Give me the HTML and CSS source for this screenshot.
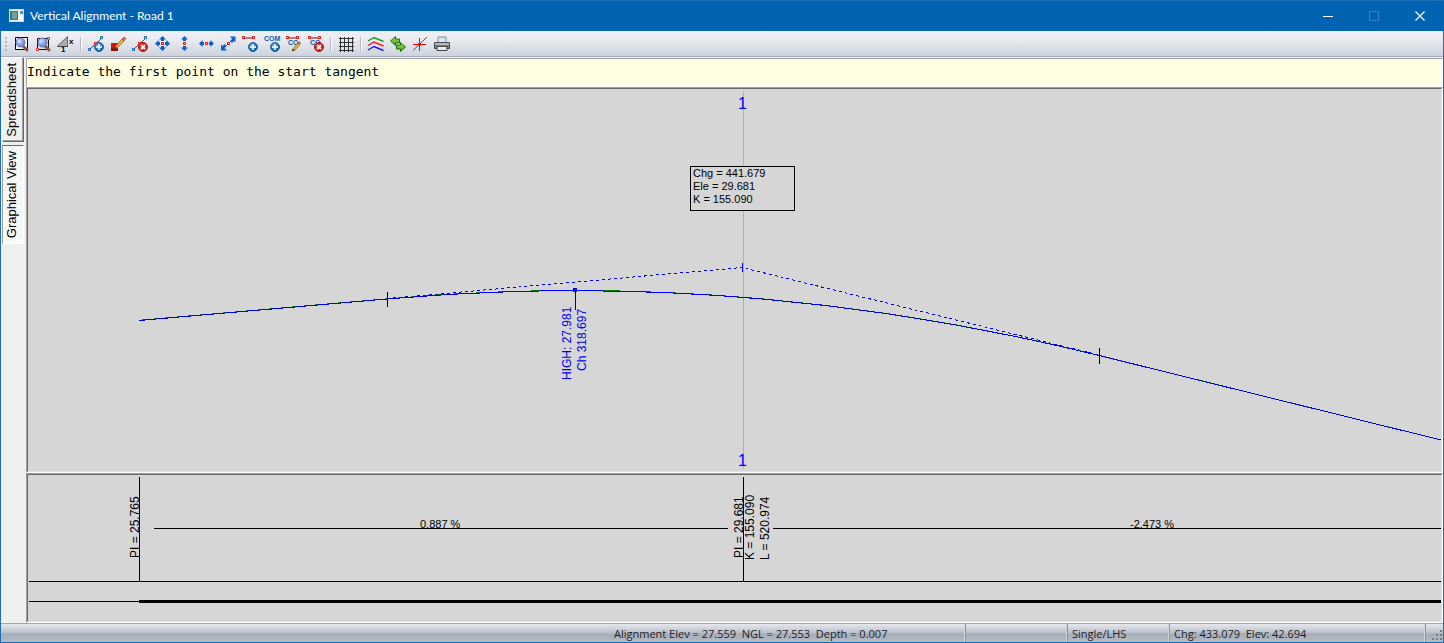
FILE: index.html
```html
<!DOCTYPE html>
<html lang="en">
<head>
<meta charset="utf-8">
<title>Vertical Alignment - Road 1</title>
<link rel="stylesheet" href="styles.css">
</head>
<body>
<svg class="defs" aria-hidden="true">
  <defs>
    <radialGradient id="lens" cx="35%" cy="35%"><stop offset="0" stop-color="#dce6ff"/><stop offset="1" stop-color="#7393dc"/></radialGradient>
    <radialGradient id="blueBall" cx="40%" cy="35%"><stop offset="0" stop-color="#5fb4ef"/><stop offset="1" stop-color="#1767b3"/></radialGradient>
    <linearGradient id="greenFill" x2="0" y2="1"><stop offset="0" stop-color="#9be05a"/><stop offset="1" stop-color="#3fa41c"/></linearGradient>
    <g id="magnifier">
      <path d="M10.5 10.5L14 14" stroke="#8a5a3c" stroke-width="3" stroke-linecap="round"/>
      <circle cx="7.5" cy="6.5" r="4.5" fill="url(#lens)" stroke="#6078b4"/>
    </g>
    <g id="nodes">
      <path d="M2 13L14 2" stroke="#444"/>
      <path d="M.5 12.5h2v2h-2zM12.5.5h2v2h-2z" fill="#fff" stroke="#0a64c8"/>
      <path d="M6.500 6.500h2v2h-2z" fill="#fff" stroke="#f00"/>
    </g>
    <g id="plus">
      <circle cx="11" cy="11" r="4.500" fill="url(#blueBall)" stroke="#1d5fa6"/>
      <path d="M11 8v6M8 11h6" stroke="#fff" stroke-width="1.500"/>
    </g>
    <g id="remove">
      <circle cx="11" cy="11" r="4.500" fill="#e02020" stroke="#b01212"/>
      <path d="M9 9l4 4M13 9l-4 4" stroke="#fff" stroke-width="1.800"/>
    </g>
    <g id="segment">
      <path d="M2 2h10" stroke="#7a1010"/>
      <path d="M.5.5h2v2h-2zM10.500.5h2v2h-2z" fill="#fff" stroke="#f00"/>
    </g>
    <path id="mid" d="M7.500 6.500h2v2h-2z" fill="#fff" stroke="#f00"/>
    <path id="vert" d="M8.500 0L12 3.500H10V5H7V3.500H5zM8.500 15L12 11.500H10V10H7v1.500H5z" fill="#0f62c4"/>
    <path id="horiz" d="M1 7.500L4.500 4v2H6v3H4.500v2zM16 7.500L12.500 4v2H11v3h1.500v2z" fill="#0f62c4"/>
  </defs>
</svg>

<div class="window">
  <header class="titlebar">
    <svg class="app-icon" width="16" height="14" viewBox="0 0 16 14" aria-hidden="true">
      <rect x=".5" y=".5" width="14" height="12" fill="#eef3f2" stroke="#cfd8dc"/>
      <rect x="1" y="2" width="8" height="9" fill="#39796f"/><rect x="3" y="3" width="5" height="7" fill="#6fa39a"/>
      <rect x="11" y="2" width="3" height="3" fill="#5a8fa8"/><rect x="11" y="6" width="3" height="5" fill="#fff"/>
    </svg>
    <h1 class="title">Vertical Alignment - Road 1</h1>
    <button class="win-btn" aria-label="Minimize"><svg width="11" height="11"><path d="M0 5.500h10" stroke="#fff"/></svg></button>
    <button class="win-btn" aria-label="Maximize" disabled><svg width="11" height="11"><path d="M.5.5h9v9h-9z" fill="none" stroke="#3384c8"/></svg></button>
    <button class="win-btn" aria-label="Close"><svg width="11" height="11"><path d="M.5.5l9 9M9.500.5l-9 9" stroke="#fff" stroke-width="1.200"/></svg></button>
  </header>

  <div class="toolbar" role="toolbar" aria-label="Alignment tools">
    <span class="grip"></span>
    <button class="tool" aria-label="Zoom extents"><svg viewBox="0 0 16 16"><path d="M2.500 1.500h12v12h-12z" fill="#fff" stroke="#000"/><use href="#magnifier"/></svg></button>
    <button class="tool" aria-label="Zoom window"><svg viewBox="0 0 16 16"><path d="M2.500 2.500h11v11h-11z" fill="#ddd" stroke="#111"/><use href="#magnifier"/><path d="M12.500 1.500h2v2h-2zM1.500 12.500h2v2h-2z" fill="#fff" stroke="#e8252b"/></svg></button>
    <button class="tool" aria-label="Vertical exaggeration"><svg viewBox="0 0 16 16"><path d="M0 10.500L10.500.500v10z" fill="#aaa" stroke="#666"/><path d="M1 10.500h10" stroke="#444"/><text x="12" y="8" class="glyph">x</text><text x="4" y="16" class="glyph">1</text></svg></button>
    <span class="sep sep-wide"></span>
    <button class="tool" aria-label="Add PI"><svg viewBox="0 0 16 16"><use href="#nodes"/><use href="#plus"/></svg></button>
    <button class="tool" aria-label="Edit PI"><svg viewBox="0 0 16 16"><path d="M1 7h7v8H1z" fill="#d81414"/><path d="M1 12h7v3H1z" fill="#9c0b0b"/><path d="M5 11L12 3l2 2-7 7-3 1z" fill="#f0b83c" stroke="#8c5a1e" stroke-width=".8"/><path d="M12 3l2-2 2 1.500L14 5z" fill="#d66a6a" stroke="#945"  stroke-width=".6"/><path d="M4 13l1-2.500 1.500 1.500z" fill="#222"/></svg></button>
    <button class="tool" aria-label="Delete PI"><svg viewBox="0 0 16 16"><use href="#nodes"/><use href="#remove"/></svg></button>
    <button class="tool" aria-label="Move PI"><svg viewBox="0 0 16 16"><use href="#vert"/><use href="#horiz"/><use href="#mid"/></svg></button>
    <button class="tool" aria-label="Move PI vertically"><svg viewBox="0 0 16 16"><use href="#vert"/><use href="#mid"/></svg></button>
    <button class="tool" aria-label="Move PI horizontally"><svg viewBox="0 0 16 16"><use href="#horiz"/><use href="#mid"/></svg></button>
    <button class="tool" aria-label="Move PI along grade"><svg viewBox="0 0 16 16"><path d="M3 13L14 2" stroke="#777"/><path d="M15.500.5v6l-1.500-1.500-2 2-2-2 2-2L10 .5zM1 14.500v-6l1.500 1.500 2-2 2 2-2 2L7 14.500z" fill="#0f62c4"/><use href="#mid"/></svg></button>
    <button class="tool" aria-label="Add segment"><svg viewBox="0 0 16 16"><use href="#segment"/><use href="#plus"/></svg></button>
    <button class="tool" aria-label="Add comment"><svg viewBox="0 0 16 16"><text x="0" y="5" class="glyph com">COM</text><use href="#plus"/></svg></button>
    <button class="tool" aria-label="Edit comment"><svg viewBox="0 0 16 16"><use href="#segment"/><text x="2" y="9" class="glyph com">CO</text><path d="M7 13l5-6 2 1.500-5 5.500-3 1z" fill="#f0b83c" stroke="#8c5a1e" stroke-width=".8"/><path d="M12 7l1.500-1.500L15 7l-1 1.500z" fill="#c65a4a"/><path d="M6 15l1-2 1.500 1.200z" fill="#222"/></svg></button>
    <button class="tool" aria-label="Delete comment"><svg viewBox="0 0 16 16"><use href="#segment"/><text x="2" y="9" class="glyph com">CO</text><use href="#remove"/></svg></button>
    <span class="sep"></span>
    <button class="tool" aria-label="Grid"><svg viewBox="0 0 16 16"><path d="M2.500 1v15M6.500 1v15M10.500 1v15M14.500 1v15M1 2.500h15M1 6.500h15M1 10.500h15M1 14.500h15" stroke="#333"/></svg></button>
    <span class="sep"></span>
    <button class="tool" aria-label="Layers"><svg viewBox="0 0 16 16" fill="none" stroke-width="1.400"><path d="M0 5L6 1.500L15.500 5.500" stroke="#159a2a"/><path d="M0 9.500L6 6L15.500 10" stroke="#f01818"/><path d="M0 14L6 10.500L15.500 14.500" stroke="#1818f0"/></svg></button>
    <button class="tool" aria-label="Swap direction"><svg viewBox="0 0 16 16"><path d="M.5 5L5.500.5v2.500h4v4h-4v2.500z" fill="url(#greenFill)" stroke="#246b12"/><path d="M15.500 11l-5-4.500V9h-4v4h4v2.500z" fill="url(#greenFill)" stroke="#246b12"/></svg></button>
    <button class="tool" aria-label="Snap"><svg viewBox="0 0 16 16"><path d="M1 14.500L15 1" stroke="#555"/><path d="M7.500 2v13M1 8.500h13" stroke="#f00"/><path d="M6.500 7.500h2v2h-2z" fill="none" stroke="#f00"/></svg></button>
    <button class="tool" aria-label="Print"><svg viewBox="0 0 16 16"><path d="M4 1h8v6H4z" fill="#d7e8fb" stroke="#7f8a96"/><path d="M.5 6.500h15v6H.5z" fill="#777d84" stroke="#4c5055"/><path d="M1 7h14v2H1z" fill="#b6bac0"/><path d="M3 10.500h10v4H3z" fill="#e6ecf4" stroke="#444"/></svg></button>
  </div>

  <div class="workspace">
    <nav class="tabs" role="tablist" aria-label="Views">
      <button class="tab" role="tab" aria-selected="false"><span>Spreadsheet</span></button>
      <button class="tab tab-active" role="tab" aria-selected="true"><span>Graphical View</span></button>
    </nav>
    <main class="content">
      <p class="prompt">Indicate the first point on the start tangent</p>

      <section class="pane profile" aria-label="Vertical profile">
        <svg class="canvas">
          <path class="guide" d="M715.500 2V380"/>
          <text class="station" x="710" y="20">1</text>
          <text class="station" x="710" y="377">1</text>
          <path class="tangent" d="M359 209.500L714 178.500L1071 266"/>
          <path class="ground" d="M111 231.300L359 209.800Q715 178.300 1071 266.400L1413 351"/>
          <path class="design" d="M111 231.500L359 210Q715 178.500 1071 266.500L1413 351"/>
          <path class="tick" d="M359.500 203v15M1071.500 259v16"/>
          <path class="tick-pi" d="M714.500 174v9"/>
          <path class="tick-high" d="M547.500 202v19"/>
          <rect class="high-dot" x="545" y="199" width="4" height="4"/>
          <g class="upright blue">
            <text transform="translate(543 291) rotate(-90)">HIGH: 27.981</text>
            <text transform="translate(558 282) rotate(-90)">Ch 318.697</text>
          </g>
          <rect class="callout" x="662.500" y="77.500" width="104" height="44"/>
          <g class="small">
            <text x="665" y="88">Chg = 441.679</text>
            <text x="665" y="101">Ele = 29.681</text>
            <text x="665" y="114">K = 155.090</text>
          </g>
        </svg>
      </section>

      <section class="pane grades" aria-label="Grades">
        <svg class="canvas">
          <path class="rule" d="M111.500 2V106M715.500 2V106M126 53.500H700M745 53.500H9999M1 106.500H9999M1 126.500H111"/>
          <path class="rule-bold" d="M111 126.500H9999"/>
          <g class="upright">
            <text transform="translate(111 83) rotate(-90)">PI = 25.765</text>
            <text transform="translate(715 83) rotate(-90)">PI = 29.681</text>
            <text transform="translate(726 85) rotate(-90)">K = 155.090</text>
            <text transform="translate(741 85) rotate(-90)">L = 520.974</text>
          </g>
          <g class="small">
            <text x="392" y="53">0.887 %</text>
            <text x="1102" y="53">-2.473 %</text>
          </g>
        </svg>
      </section>
    </main>
  </div>

  <footer class="status">
    <span class="cell cell-message">Alignment Elev = 27.559  NGL = 27.553  Depth = 0.007</span>
    <span class="cell cell-mode"></span>
    <span class="cell cell-mode">Single/LHS</span>
    <span class="cell cell-position">Chg: 433.079  Elev: 42.694</span>
    <svg class="size-grip" width="17" height="18" aria-hidden="true"><path d="M14 6h2v2h-2zM14 10h2v2h-2zM14 14h2v2h-2zM10 10h2v2h-2zM10 14h2v2h-2zM6 14h2v2h-2z" fill="#777b84"/></svg>
  </footer>
</div>
</body>
</html>
```
FILE: styles.css
```css
* { box-sizing: border-box; }

body {
  margin: 0;
  font-family: "Liberation Sans", Arial, sans-serif;
  color: #000;
}

button {
  border: 0;
  padding: 0;
  background: none;
  color: inherit;
  font: inherit;
}

.defs { position: absolute; width: 0; height: 0; }

.window {
  display: flex;
  flex-direction: column;
  height: 100vh;
  border: 1px solid #1a6fb8;
  border-top: 0;
  background: #f0f0f0;
}

/* Title bar */
.titlebar {
  display: flex;
  align-items: center;
  flex: none;
  height: 31px;
  margin: 0 -1px;
  padding: 0 1px 0 9px;
  border-top: 1px solid #1a6fb8;
  background: #0063b1;
  color: #fff;
}
.app-icon { flex: none; }
.title {
  flex: 1;
  margin: 0 0 0 5px;
  font: 400 12px/16px Lato, "Open Sans", sans-serif;
}
.win-btn {
  display: grid;
  place-items: center;
  width: 46px;
  height: 30px;
}

/* Toolbar */
.toolbar {
  display: flex;
  align-items: center;
  flex: none;
  height: 26px;
  border-bottom: 1px solid #a9adba;
  background: linear-gradient(#f0f0f6, #eaebf0 35%, #cdd3dd);
}
.grip {
  width: 2px;
  height: 14px;
  margin: 0 3px 0 4px;
  background: repeating-linear-gradient(#b4b7be 0 2px, transparent 2px 4px);
}
.tool {
  display: grid;
  place-items: center;
  flex: none;
  width: 22px;
  height: 22px;
}
.tool svg { width: 16px; height: 16px; overflow: visible; fill: none; }
.sep {
  width: 2px;
  height: 14px;
  margin: 0 3px;
  border-left: 1px solid #b5b8c0;
  border-right: 1px solid #fff;
}
.sep-wide { margin-left: 4px; }
.glyph { font: 700 8px "Liberation Sans", Arial, sans-serif; fill: #000; }
.com { font-size: 7px; fill: #0f55b0; }

/* Workspace */
.workspace { display: flex; flex: 1; min-height: 0; }
.tabs {
  display: flex;
  flex-direction: column;
  align-items: flex-start;
  flex: none;
  gap: 3px;
  width: 25px;
  padding-left: 1px;
}
.tab {
  display: grid;
  place-items: center;
  width: 22px;
  height: 85px;
  padding-right: 2px;
  border: 1px solid;
  border-color: #fff #696969 #696969 #fff;
  box-shadow: inset -1px -1px #a0a0a0;
  font-size: 13px;
  line-height: 16px;
}
.tab span { writing-mode: vertical-rl; transform: rotate(180deg); }
.tab-active {
  height: 99px;
  border-color: #696969 #fff #fff #a0a0a0;
  box-shadow: none;
  background: repeating-conic-gradient(#fff 0 25%, #f0f0f0 0 50%) 0 0 / 2px 2px;
}

.content { display: flex; flex-direction: column; flex: 1; min-width: 0; padding-top: 1px; }
.prompt {
  flex: none;
  height: 29px;
  margin: 0;
  border: 1px solid;
  border-color: #a0a0a0 #fff #fff #a0a0a0;
  background: #ffffe1;
  font: 13px/26px "DejaVu Sans Mono", monospace;
}
.pane {
  border: 1px solid;
  border-color: #a0a0a0 #fff #fff #a0a0a0;
}
.profile { flex: 1; min-height: 0; }
.grades { flex: none; height: 150px; }
.canvas {
  display: block;
  width: 100%;
  height: 100%;
  border: 1px solid;
  border-color: #696969 #e3e3e3 #e3e3e3 #696969;
  background: #d6d6d6;
}

/* Drawing */
.canvas path { fill: none; shape-rendering: crispEdges; }
.guide { stroke: #b0b0b0; }
.tangent { stroke: #00f; stroke-dasharray: 3 3; }
.ground { stroke: #008000; }
.design { stroke: #00f; }
.tick, .rule { stroke: #000; }
.tick-pi { stroke: #00f; }
.tick-high { stroke: #0000a0; }
.high-dot { fill: #00f; }
.callout { fill: #d6d6d6; stroke: #000; }
.canvas .rule-bold { stroke: #000; stroke-width: 3px; }
.station { font-size: 16px; fill: #00f; }
.upright { font-size: 12px; }
.small { font-size: 11px; }
.blue { fill: #00f; }

/* Status bar */
.status {
  display: flex;
  justify-content: flex-end;
  flex: none;
  height: 19px;
  border-top: 1px solid #a0a4ae;
  background: linear-gradient(#e6e8ed, #b8beca 50%, #a6acb6 55%, #b6bcc6);
  font: 11px/20px "Open Sans", "Noto Sans", sans-serif;
  color: #1e1e28;
}
.cell {
  padding-left: 4px;
  border-right: 1px solid #8f949e;
  box-shadow: inset -1px 0 #d0d4dc;
  white-space: pre;
}
.cell-message { width: 356px; }
.cell-mode { width: 102px; }
.cell-position { width: 256px; }
.size-grip { flex: none; }
```
